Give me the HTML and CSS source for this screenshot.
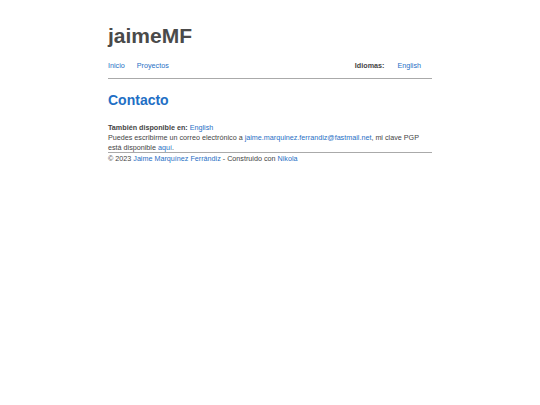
FILE: index.html
```html
<!DOCTYPE html>
<html lang="es">
<head>
<meta charset="utf-8">
<title>Contacto - jaimeMF</title>
<link rel="stylesheet" href="styles.css">
</head>
<body>
<div class="page">
  <header class="site-header">
    <h1 class="site-title">jaimeMF</h1>
    <nav class="nav">
      <div class="nav-left">
        <a href="#">Inicio</a>
        <a href="#">Proyectos</a>
      </div>
      <div class="nav-right">
        <span class="nav-label">Idiomas:</span>
        <a href="#">English</a>
      </div>
    </nav>
  </header>
  <main class="content">
    <h2 class="page-title">Contacto</h2>
    <p class="translations"><strong>También disponible en:</strong> <a href="#">English</a></p>
    <p class="text">Puedes escribirme un correo electrónico a <a href="#">jaime.marquinez.ferrandiz@fastmail.net</a>, mi clave PGP está disponible <a href="#">aquí</a>.</p>
  </main>
  <footer class="footer">
    © 2023 <a href="#">Jaime Marquínez Ferrándiz</a> - Construido con <a href="#">Nikola</a>
  </footer>
</div>
</body>
</html>
```
FILE: styles.css
```css
html, body {
  margin: 0;
  padding: 0;
  background: #fff;
}
body {
  font-family: "Liberation Sans", Arial, sans-serif;
  font-size: 7.2px;
  line-height: 10px;
  color: #444;
}
a {
  color: #1f6fc5;
  text-decoration: none;
}
.page {
  width: 324px;
  margin: 0 auto;
  padding-top: 21px;
}
.site-title {
  margin: 0;
  font-size: 21px;
  line-height: 30px;
  font-weight: bold;
  color: #4a4a4a;
}
.nav {
  display: flex;
  justify-content: space-between;
  align-items: center;
  height: 24px;
  padding-top: 2px;
  margin-top: 1px;
  border-bottom: 1px solid #aaa;
  padding-right: 11px;
}
.nav-left, .nav-right {
  display: flex;
  gap: 12px;
}
.nav-right {
  gap: 13px;
}
.nav-label {
  font-weight: bold;
  color: #444;
}
.page-title {
  margin: 12px 0 0;
  font-size: 14px;
  line-height: 18px;
  font-weight: bold;
  color: #1f6fc5;
}
.translations {
  margin: 14px 0 0;
}
.text {
  margin: 0;
}
.footer {
  border-top: 1px solid #aaa;
  margin-top: -1px;
  padding-top: 1px;
  color: #444;
}
```
